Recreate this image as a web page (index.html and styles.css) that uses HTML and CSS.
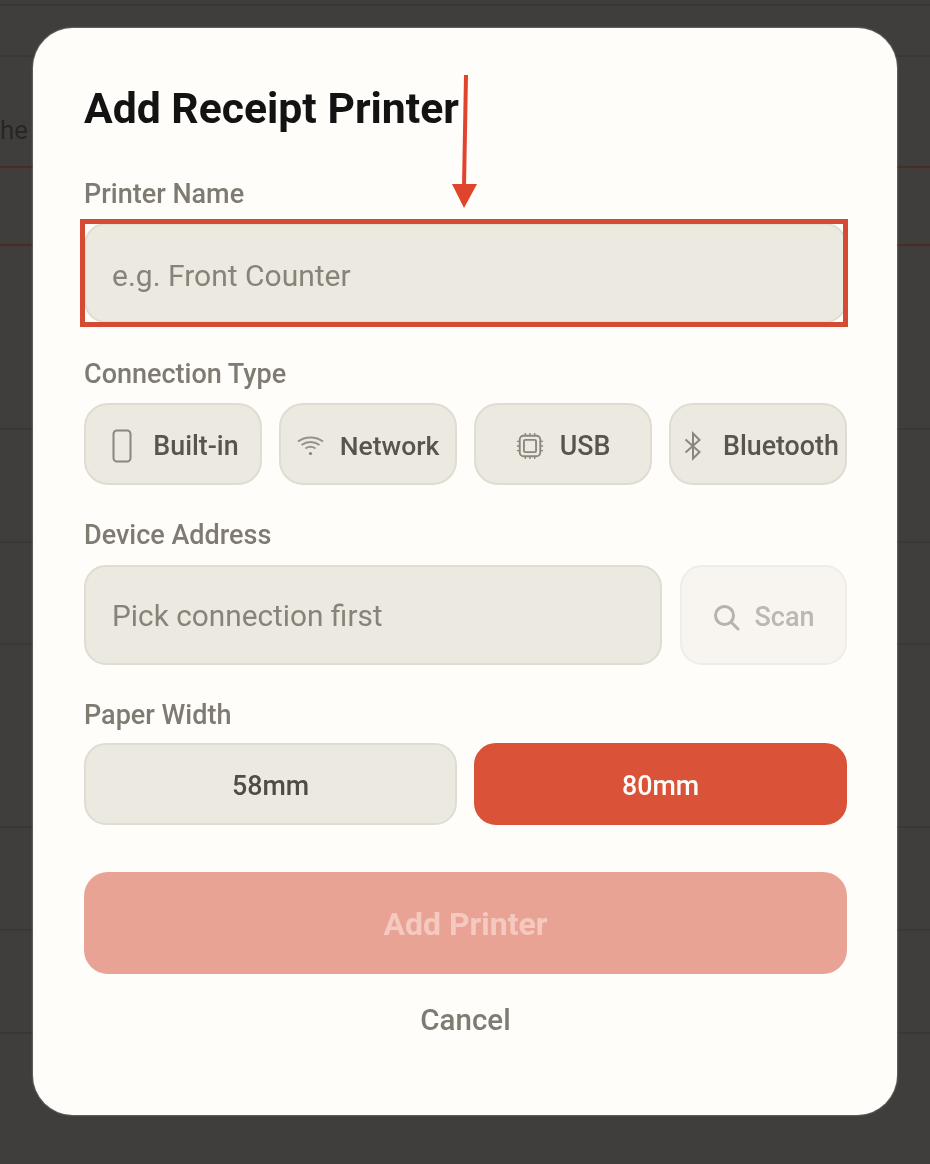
FILE: index.html
```html
<!DOCTYPE html>
<html lang="en">
<head>
<meta charset="utf-8">
<title>Add Receipt Printer</title>
<link rel="stylesheet" href="styles.css">
</head>
<body>
<div class="page">
  <div class="backdrop">
    <div class="row r1"></div>
    <div class="row r2"></div>
    <div class="row r3"><span class="row-text">he</span></div>
    <div class="row r4"></div>
    <div class="row r5"></div>
    <div class="row r6"></div>
    <div class="row r7"></div>
    <div class="row r8"></div>
    <div class="row r9"></div>
    <div class="row r10"></div>
  </div>

  <section class="modal">
    <h1 class="title">Add Receipt Printer</h1>

    <div class="label">Printer Name</div>
    <div class="field">e.g. Front Counter</div>

    <div class="label label-next">Connection Type</div>
    <div class="chips">
      <button class="chip chip-builtin">
        <svg class="icon icon-phone" viewBox="0 0 22 34"><rect x="2.500" y="1.500" width="17" height="31" rx="3.500"/></svg>
        <span>Built-in</span>
      </button>
      <button class="chip">
        <svg class="icon icon-wifi" viewBox="0 0 27 21"><path d="M1 6.500C8 1 19 1 26 6.500"/><path d="M4.500 10C10 6 17 6 22.500 10"/><path d="M8.500 13.500C11.500 11.500 15.500 11.500 18.500 13.500"/><circle class="dot" cx="13.500" cy="18.500" r="1.600"/></svg>
        <span class="text-network">Network</span>
      </button>
      <button class="chip">
        <svg class="icon icon-chip" viewBox="0 0 30 30"><rect x="4" y="4" width="22" height="22" rx="4"/><rect x="8.500" y="8.500" width="13" height="13" rx="1.500"/><path class="thin" d="M10 1v3M15 1v3M20 1v3M10 26v3M15 26v3M20 26v3M1 10h3M1 15h3M1 20h3M26 10h3M26 15h3M26 20h3"/></svg>
        <span>USB</span>
      </button>
      <button class="chip chip-bluetooth">
        <svg class="icon icon-bt" viewBox="0 0 20 30"><path d="M2.500 8.500L16.500 21L10 27.500V2.500L16.500 9L2.500 21.500"/></svg>
        <span>Bluetooth</span>
      </button>
    </div>

    <div class="label label-next2">Device Address</div>
    <div class="address">
      <div class="field field-grow">Pick connection first</div>
      <button class="scan">
        <svg class="icon-scan" viewBox="0 0 28 28"><circle cx="12.500" cy="12.500" r="9"/><path d="M19.500 19.500l6.500 6.500"/></svg>
        <span>Scan</span>
      </button>
    </div>

    <div class="label label-next2 label-tight">Paper Width</div>
    <div class="papers">
      <button class="paper">58mm</button>
      <button class="paper paper-on">80mm</button>
    </div>

    <button class="submit">Add Printer</button>
    <button class="cancel">Cancel</button>
  </section>

  <svg class="annotation" viewBox="0 0 930 1164">
    <rect class="a-rect" x="82.500" y="221.500" width="763" height="103"/>
    <path class="a-line" d="M466 75L464 186"/>
    <path class="a-head" d="M452 184H477L464 208Z"/>
  </svg>
</div>
</body>
</html>
```
FILE: styles.css
```css
* { box-sizing: border-box; }
html, body { margin: 0; padding: 0; }
body {
  width: 930px;
  height: 1164px;
  overflow: hidden;
  background: #3f3e3c;
  font-family: Roboto, "Liberation Sans", sans-serif;
}
.page { position: relative; width: 930px; height: 1164px; overflow: hidden; filter: blur(0.45px); }

.backdrop { display: flex; flex-direction: column; }
.row { border-bottom: 2px solid #393836; }
.r1 { height: 6px; }
.r2 { height: 51px; }
.r3 { height: 111px; display: flex; align-items: flex-start; border-bottom-color: #4a2b26; }
.r4 { height: 78px; border-bottom-color: #4a2b26; }
.r5 { height: 184px; }
.r6 { height: 113px; }
.r7 { height: 102px; }
.r8 { height: 183px; }
.r9 { height: 103px; }
.r10 { height: 103px; }
.row-text { font-size: 26px; line-height: 32px; color: #262625; margin-top: 57px; }

.modal {
  position: absolute;
  left: 33px;
  top: 28px;
  width: 864px;
  height: 1087px;
  background: #fefdfa;
  border-radius: 40px;
  padding: 56px 50px 0 51px;
  display: flex;
  flex-direction: column;
  box-shadow: 0 0 2px rgba(255, 255, 255, 0.6);
}
.title {
  margin: 0 0 45px;
  font-size: 42.700px;
  line-height: 48px;
  font-weight: 700;
  color: #131313;
}
.label {
  height: 32px;
  margin-bottom: 14px;
  padding-top: 1px;
  font-size: 27px;
  line-height: 32px;
  font-weight: 500;
  color: #7f7b72;
}
.label-next { margin-top: 34px; }
.label-next2 { margin-top: 33px; margin-bottom: 15px; }
.label-tight { margin-bottom: 13px; }

.field {
  height: 100px;
  padding: 4px 26px 0;
  display: flex;
  align-items: center;
  background: #ece9e0;
  border: 2px solid #e0dcd2;
  border-radius: 22px;
  font-size: 30px;
  color: #87837a;
}
.field-grow { flex: 1; padding-top: 1px; font-size: 29.800px; }

button { font-family: inherit; margin: 0; cursor: pointer; }

.chips { display: grid; grid-template-columns: repeat(4, 178px); column-gap: 17px; }
.chip {
  height: 82px;
  padding: 3px 0 0;
  display: flex;
  align-items: center;
  justify-content: center;
  gap: 16px;
  background: #ece9e0;
  border: 2px solid #e0dcd2;
  border-radius: 24px;
  font-size: 26.800px;
  font-weight: 500;
  color: #58554e;
  white-space: nowrap;
}
.chip-builtin { gap: 20px; padding-left: 4px; }
.chip-bluetooth { gap: 20px; padding-left: 12px; justify-content: flex-start; }
.text-network { font-size: 26.500px; }
.icon { fill: none; stroke: #8a867d; stroke-width: 2; flex: none; }
.icon-phone { width: 22px; height: 34px; }
.icon-wifi { width: 27px; height: 21px; stroke: #96928a; }
.icon-chip { width: 28px; height: 28px; }
.icon-bt { width: 20px; height: 30px; }
.icon .dot { fill: #8a867d; stroke: none; }
.icon .thin { stroke-width: 1.500; }

.address { display: flex; gap: 18px; }
.scan {
  width: 167px;
  height: 100px;
  padding: 3px 0 0;
  display: flex;
  align-items: center;
  justify-content: center;
  gap: 14px;
  background: #f8f5f0;
  border: 2px solid #f0ede6;
  border-radius: 22px;
  font-size: 27px;
  font-weight: 500;
  color: #bcb8b0;
}
.icon-scan { width: 28px; height: 28px; fill: none; stroke: #b7b3aa; stroke-width: 3; stroke-linecap: round; }

.papers { display: grid; grid-template-columns: 373px 373px; column-gap: 17px; }
.paper {
  height: 82px;
  padding: 4px 0 0;
  background: #ece9e0;
  border: 2px solid #e0dcd2;
  border-radius: 22px;
  font-size: 26.800px;
  font-weight: 500;
  color: #4f4c46;
}
.paper-on { background: #da5237; border-color: #da5237; color: #fefdfa; }

.submit {
  height: 102px;
  margin-top: 47px;
  padding: 2px 0 0;
  background: #e9a395;
  border: 0;
  border-radius: 24px;
  font-size: 32px;
  font-weight: 700;
  color: #f5c9bf;
}
.cancel {
  margin-top: 30px;
  height: 32px;
  padding: 0;
  background: none;
  border: 0;
  font-size: 29.500px;
  line-height: 32px;
  font-weight: 500;
  color: #7f7b72;
}

.annotation { position: absolute; left: 0; top: 0; width: 930px; height: 1164px; pointer-events: none; }
.a-rect { fill: none; stroke: #d44a33; stroke-width: 5; }
.a-line { fill: none; stroke: #e0442c; stroke-width: 4; }
.a-head { fill: #e0442c; }
```
